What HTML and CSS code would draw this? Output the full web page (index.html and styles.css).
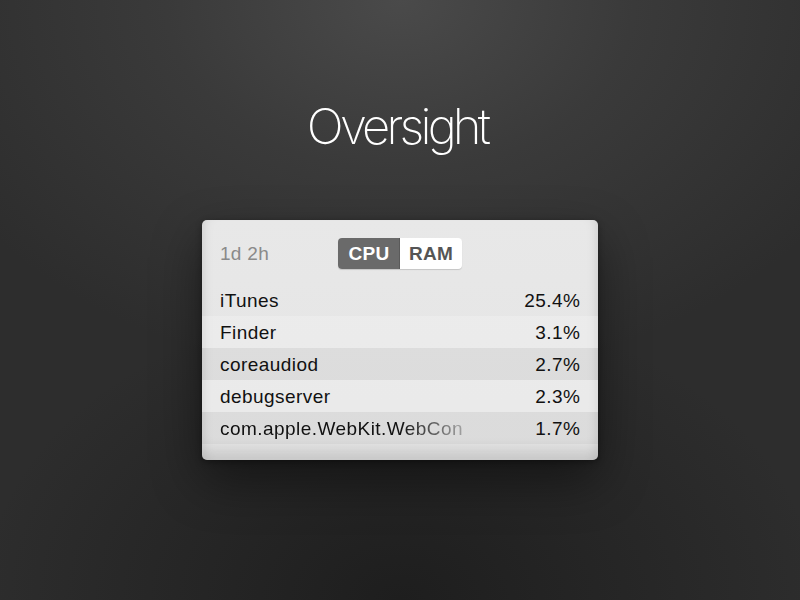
FILE: index.html
```html
<!DOCTYPE html>
<html>
<head>
<meta charset="utf-8">
<link rel="stylesheet" href="styles.css">
</head>
<body>
<main class="stage">
  <h1 class="title">Oversight</h1>
  <section class="panel">
    <header class="panel-head">
      <span class="uptime">1d 2h</span>
      <div class="seg">
        <span class="seg-item active">CPU</span>
        <span class="seg-item">RAM</span>
      </div>
    </header>
    <ul class="rows">
      <li class="row r1"><span class="name">iTunes</span><span class="pct">25.4%</span></li>
      <li class="row r2"><span class="name">Finder</span><span class="pct">3.1%</span></li>
      <li class="row r3"><span class="name">coreaudiod</span><span class="pct">2.7%</span></li>
      <li class="row r2"><span class="name">debugserver</span><span class="pct">2.3%</span></li>
      <li class="row r3"><span class="name fade">com.apple.WebKit.WebCon</span><span class="pct">1.7%</span></li>
    </ul>
  </section>
</main>
</body>
</html>
```

FILE: styles.css
```css
html, body {
  margin: 0;
  padding: 0;
  width: 800px;
  height: 600px;
  overflow: hidden;
}
body {
  background:
    radial-gradient(ellipse 520px 380px at 50% 0%, #4a4a4a 0%, #3a3a3a 45%, rgba(45,45,45,0) 100%),
    radial-gradient(ellipse 420px 300px at 50% 100%, #1e1e1e 0%, rgba(34,34,34,0) 100%),
    #2d2d2d;
  font-family: "Liberation Sans", Arial, sans-serif;
}
.stage {
  display: flex;
  flex-direction: column;
  align-items: center;
}
.title {
  margin: 97px 0 0;
  height: 123px;
  font-family: Inter, "Liberation Sans", sans-serif;
  font-weight: 200;
  font-size: 49px;
  line-height: 60px;
  color: #ffffff;
  letter-spacing: -3.8px;
  padding-right: 6px;
}
.panel {
  width: 396px;
  height: 240px;
  border-radius: 5px;
  background: linear-gradient(to bottom, #e8e8e8 0%, #e4e4e4 100%);
  box-shadow: 0 20px 50px rgba(0,0,0,0.45), 0 2px 6px rgba(0,0,0,0.35), inset 0 -16px 14px -6px rgba(0,0,0,0.12), inset 10px 0 12px -8px rgba(0,0,0,0.08), inset -10px 0 12px -8px rgba(0,0,0,0.08);
  overflow: hidden;
  display: flex;
  flex-direction: column;
}
.panel-head {
  display: flex;
  align-items: center;
  height: 64px;
  padding: 2px 0 0 18px;
  box-sizing: border-box;
}
.uptime {
  width: 118px;
  font-size: 19px;
  letter-spacing: 0.3px;
  color: #8a8a8a;
  padding-top: 2px;
}
.seg {
  display: flex;
  height: 31px;
  border-radius: 4px;
  overflow: hidden;
  box-shadow: 0 1px 1px rgba(0,0,0,0.15);
  background: #fff;
}
.seg-item {
  width: 62px;
  display: flex;
  align-items: center;
  justify-content: center;
  font-weight: bold;
  font-size: 19px;
  letter-spacing: 0.3px;
  color: #555;
  padding-top: 1px;
}
.seg-item.active {
  background: #6a6a6a;
  color: #fff;
  box-shadow: inset -1px 0 0 #5a5a5a;
}
.rows {
  list-style: none;
  margin: 0;
  padding: 0;
}
.row {
  display: flex;
  justify-content: space-between;
  align-items: center;
  height: 32px;
  padding: 2px 18px 0;
  box-sizing: border-box;
  font-size: 19px;
  letter-spacing: 0.45px;
  color: #111;
}
.r1 { background: transparent; }
.r2 { background: rgba(255,255,255,0.22); }
.r3 { background: rgba(0,0,0,0.04); }
.name {
  white-space: nowrap;
  overflow: hidden;
  width: 250px;
}
.fade {
  -webkit-mask-image: linear-gradient(to right, #000 72%, rgba(0,0,0,0.2) 100%);
  mask-image: linear-gradient(to right, #000 72%, rgba(0,0,0,0.2) 100%);
}
.pct {
  text-align: right;
  margin-right: -0.45px;
}
```
